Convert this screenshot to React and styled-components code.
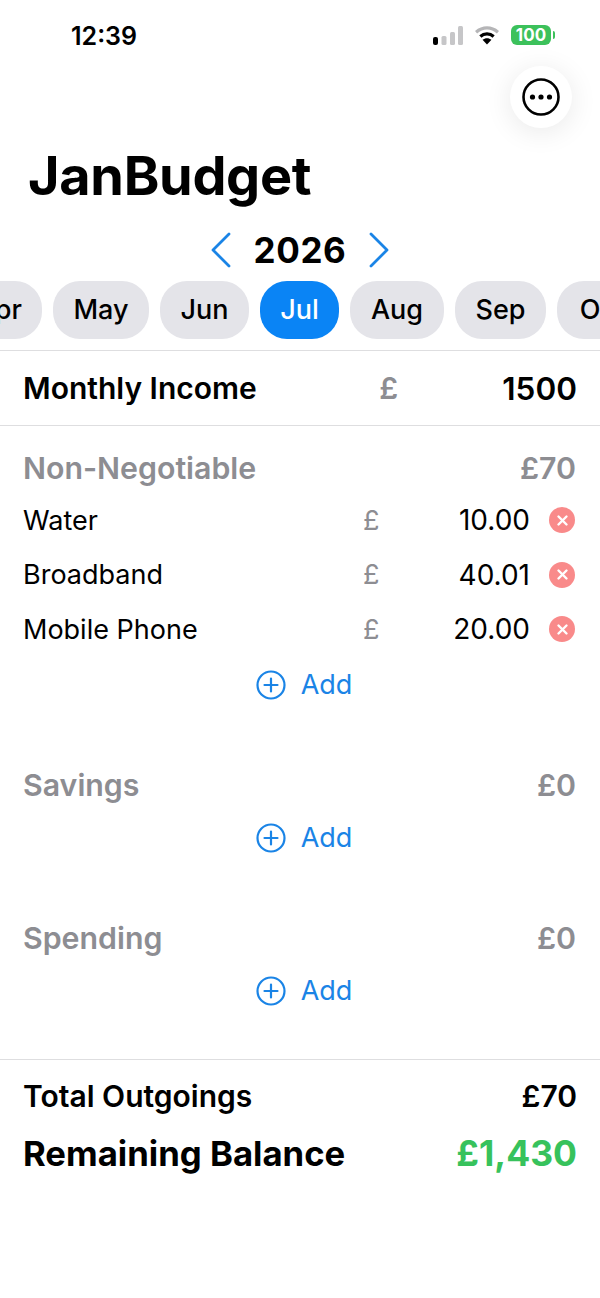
import React from "react";
import styled, { createGlobalStyle } from "styled-components";

const Global = createGlobalStyle`
  html, body { margin: 0; padding: 0; background: #fff; }
  body { width: 600px; height: 1298px; overflow: hidden; font-family: Inter, "Liberation Sans", sans-serif; color: #000; }
`;

const Page = styled.div`
  width: 600px;
  height: 1298px;
  position: relative;
  overflow: hidden;
  background: #fff;
`;

const StatusBar = styled.div`
  height: 67px;
  box-sizing: border-box;
  padding: 22px 49px 0 71px;
  display: flex;
  justify-content: space-between;
  align-items: flex-start;
`;

const Clock = styled.div`
  font-size: 25px;
  font-weight: 600;
  line-height: 29px;
`;

const StatusIcons = styled.div`
  display: flex;
  align-items: center;
  gap: 11px;
  margin-top: 3px;
`;

const Battery = styled.div`
  width: 40px;
  height: 20px;
  border-radius: 6px;
  background: #3cc15b;
  color: #fff;
  font-size: 17px;
  font-weight: 700;
  line-height: 20px;
  text-align: center;
  position: relative;
  &::after {
    content: "";
    position: absolute;
    right: -4px;
    top: 6px;
    width: 2px;
    height: 8px;
    border-radius: 0 2px 2px 0;
    background: #3cc15b;
  }
`;

const MenuButton = styled.div`
  position: absolute;
  left: 510px;
  top: 66px;
  width: 62px;
  height: 62px;
  border-radius: 50%;
  background: #fff;
  box-shadow: 0 4px 28px rgba(0, 0, 0, 0.09);
  display: flex;
  align-items: center;
  justify-content: center;
`;

const Title = styled.h1`
  margin: 78px 0 0 28px;
  font-size: 54px;
  font-weight: 700;
  line-height: 62px;
  letter-spacing: -0.3px;
`;

const YearRow = styled.div`
  margin-top: 17px;
  height: 52px;
  display: flex;
  align-items: center;
  justify-content: center;
  gap: 23px;
`;

const Year = styled.div`
  font-size: 35px;
  font-weight: 700;
  letter-spacing: 0.6px;
  line-height: 44px;
`;

const Months = styled.div`
  margin-top: 5px;
  margin-left: -49px;
  height: 58px;
  display: flex;
  gap: 11px;
  white-space: nowrap;
`;

const Month = styled.div`
  flex: none;
  width: ${(p) => p.$w}px;
  height: 58px;
  border-radius: 27px;
  box-sizing: border-box;
  background: ${(p) => (p.$active ? "#0a84f5" : "#e4e4e9")};
  color: ${(p) => (p.$active ? "#fff" : "#000")};
  font-size: 27px;
  font-weight: 500;
  line-height: 58px;
  text-align: ${(p) => p.$align || "center"};
  padding: ${(p) => p.$pad || "0"};
  overflow: hidden;
`;

const IncomeRow = styled.div`
  margin-top: 11px;
  height: 76px;
  box-sizing: border-box;
  border-top: 1px solid #dedee0;
  border-bottom: 1px solid #dedee0;
  padding: 0 23px 0 23px;
  display: flex;
  align-items: center;
`;

const IncomeLabel = styled.div`
  font-size: 30px;
  font-weight: 600;
  flex: 1;
`;

const IncomeCurrency = styled.div`
  font-size: 30px;
  font-weight: 600;
  color: #8d8d92;
  width: 123px;
`;

const IncomeValue = styled.div`
  font-size: 31.5px;
  font-weight: 600;
`;

const Section = styled.section`
  padding: ${(p) => p.$top}px 25px 0 23px;
`;

const SectionHead = styled.div`
  display: flex;
  justify-content: space-between;
  align-items: center;
  height: 36px;
  margin: 0 -1px 7px 0;
  font-size: 30.3px;
  font-weight: 600;
  color: #8d8d92;
`;

const ItemRow = styled.div`
  height: 54.5px;
  display: flex;
  align-items: center;
`;

const ItemName = styled.div`
  flex: 1;
  font-size: 27px;
`;

const ItemCurrency = styled.div`
  width: 67px;
  font-size: 27px;
  color: #8d8d92;
`;

const ItemAmount = styled.div`
  width: 100px;
  text-align: right;
  font-size: 28px;
`;

const Remove = styled.div`
  margin-left: 19px;
  width: 26px;
  height: 26px;
  border-radius: 50%;
  background: #f98a8a;
  display: flex;
  align-items: center;
  justify-content: center;
`;

const AddRow = styled.div`
  height: 56px;
  display: flex;
  align-items: center;
  justify-content: center;
  gap: 15px;
  font-size: 27px;
  color: #1a84e6;
  padding-left: 10px;
`;

const Totals = styled.div`
  margin-top: 40.5px;
  border-top: 1px solid #dedee0;
  padding: 16px 23px 0 23px;
`;

const TotalRow = styled.div`
  display: flex;
  justify-content: space-between;
  align-items: center;
  height: 40px;
  font-size: 30px;
  font-weight: 600;
`;

const BalanceRow = styled.div`
  display: flex;
  justify-content: space-between;
  align-items: center;
  height: 58px;
  margin-top: 8px;
  font-size: 34.7px;
  font-weight: 700;
`;

const Balance = styled.span`
  color: #37c25c;
  font-size: 35.5px;
`;

const PlusIcon = () => (
  <svg width="30" height="30" viewBox="0 0 30 30" fill="none" stroke="#1a84e6" strokeWidth="2.2" strokeLinecap="round">
    <circle cx="15" cy="15" r="13.5" />
    <path d="M15 8.5v13M8.5 15h13" />
  </svg>
);

const Add = () => (
  <AddRow>
    <PlusIcon />
    <span>Add</span>
  </AddRow>
);

const CrossIcon = () => (
  <svg width="13" height="13" viewBox="0 0 13 13" stroke="#fff" strokeWidth="2.4" strokeLinecap="round">
    <path d="M2.5 2.5l8 8M10.5 2.5l-8 8" />
  </svg>
);

const items = [
  ["Water", "10.00"],
  ["Broadband", "40.01"],
  ["Mobile Phone", "20.00"],
];

export default function App() {
  return (
    <Page>
      <Global />
      <StatusBar>
        <Clock>12:39</Clock>
        <StatusIcons>
          <svg width="30" height="19" viewBox="0 0 30 19">
            <rect x="0" y="11" width="5" height="8" rx="2" fill="#000" />
            <rect x="8.5" y="10" width="5" height="9" rx="1.5" fill="#c6c6c8" />
            <rect x="17" y="6" width="5" height="13" rx="1.5" fill="#c6c6c8" />
            <rect x="25" y="0" width="5" height="19" rx="1.5" fill="#c6c6c8" />
          </svg>
          <svg width="26" height="19" viewBox="0 0 27 20" fill="none" strokeLinecap="butt">
            <path d="M2 6.5C9 .5 18 .5 25 6.5" stroke="#b5b5b7" strokeWidth="3.4" />
            <path d="M6.5 11C10.5 7.5 16.5 7.5 20.5 11" stroke="#000" strokeWidth="3.4" />
            <path d="M13.5 19.5L8.8 14.6C11.5 12.4 15.5 12.4 18.2 14.6Z" fill="#000" />
          </svg>
          <Battery>100</Battery>
        </StatusIcons>
      </StatusBar>
      <MenuButton>
        <svg width="38" height="38" viewBox="0 0 38 38" fill="none">
          <circle cx="19" cy="19" r="17.5" stroke="#000" strokeWidth="2.6" />
          <circle cx="10.5" cy="19" r="2.6" fill="#000" />
          <circle cx="19" cy="19" r="2.6" fill="#000" />
          <circle cx="27.5" cy="19" r="2.6" fill="#000" />
        </svg>
      </MenuButton>
      <Title>JanBudget</Title>
      <YearRow>
        <svg width="20" height="36" viewBox="0 0 20 36" fill="none" stroke="#1a84e6" strokeWidth="2.8" strokeLinecap="round" strokeLinejoin="round">
          <path d="M18 2L2 18l16 16" />
        </svg>
        <Year>2026</Year>
        <svg width="20" height="36" viewBox="0 0 20 36" fill="none" stroke="#1a84e6" strokeWidth="2.8" strokeLinecap="round" strokeLinejoin="round">
          <path d="M2 2l16 16L2 34" />
        </svg>
      </YearRow>
      <Months>
        <Month $w={91} $align="right" $pad="0 20px 0 0">Apr</Month>
        <Month $w={96}>May</Month>
        <Month $w={89}>Jun</Month>
        <Month $w={79} $active>Jul</Month>
        <Month $w={94}>Aug</Month>
        <Month $w={91}>Sep</Month>
        <Month $w={91}>Oct</Month>
      </Months>
      <IncomeRow>
        <IncomeLabel>Monthly Income</IncomeLabel>
        <IncomeCurrency>£</IncomeCurrency>
        <IncomeValue>1500</IncomeValue>
      </IncomeRow>
      <Section $top={24}>
        <SectionHead>
          <span>Non-Negotiable</span>
          <span>£70</span>
        </SectionHead>
        {items.map(([name, amount]) => (
          <ItemRow key={name}>
            <ItemName>{name}</ItemName>
            <ItemCurrency>£</ItemCurrency>
            <ItemAmount>{amount}</ItemAmount>
            <Remove><CrossIcon /></Remove>
          </ItemRow>
        ))}
        <Add />
      </Section>
      <Section $top={54}>
        <SectionHead>
          <span>Savings</span>
          <span>£0</span>
        </SectionHead>
        <Add />
      </Section>
      <Section $top={54}>
        <SectionHead>
          <span>Spending</span>
          <span>£0</span>
        </SectionHead>
        <Add />
      </Section>
      <Totals>
        <TotalRow>
          <span>Total Outgoings</span>
          <span>£70</span>
        </TotalRow>
        <BalanceRow>
          <span>Remaining Balance</span>
          <Balance>£1,430</Balance>
        </BalanceRow>
      </Totals>
    </Page>
  );
}
